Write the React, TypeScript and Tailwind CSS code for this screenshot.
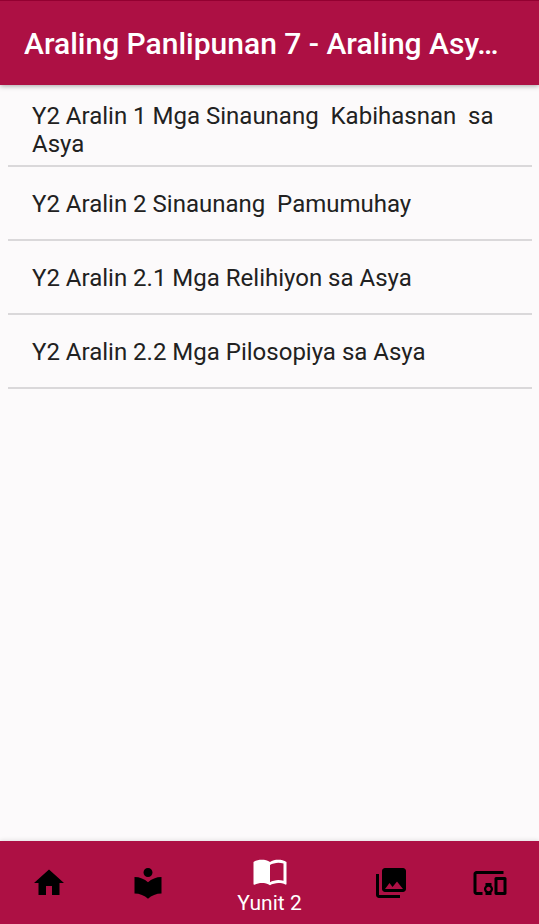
import { MdHome, MdLocalLibrary, MdImportContacts, MdCollections, MdDevicesOther } from 'react-icons/md';

const lessons = [
  'Y2 Aralin 1 Mga Sinaunang  Kabihasnan  sa Asya',
  'Y2 Aralin 2 Sinaunang  Pamumuhay',
  'Y2 Aralin 2.1 Mga Relihiyon sa Asya',
  'Y2 Aralin 2.2 Mga Pilosopiya sa Asya',
];

const tabs = [
  { name: 'Home', icon: MdHome },
  { name: 'Yunit 1', icon: MdLocalLibrary },
  { name: 'Yunit 2', icon: MdImportContacts, active: true },
  { name: 'Yunit 3', icon: MdCollections },
  { name: 'Yunit 4', icon: MdDevicesOther },
];

export default function App() {
  return (
    <div className="flex min-h-screen flex-col bg-[#fcfafb] font-[Roboto,sans-serif] text-[#212121]">
      {/* App bar */}
      <header className="relative border-t border-[#930031] bg-[#ad1044] px-6 pt-[25px] pb-[23px] shadow-[0_1px_5px_rgba(0,0,0,0.35)]">
        <h1 className="truncate text-[30px] leading-9 font-medium text-white">
          Araling Panlipunan 7 - Araling Asy…
        </h1>
      </header>

      {/* Lessons */}
      <main className="flex-1 py-2 pr-[7px] pl-2">
        <ul>
          {lessons.map((lesson) => (
            <li key={lesson} className="border-b-2 border-[#dad8da]">
              <a href="#" className="flex min-h-18 items-center px-6 pt-[9px] pb-[7px] text-2xl leading-7 whitespace-pre-wrap">
                {lesson}
              </a>
            </li>
          ))}
        </ul>
      </main>

      {/* Bottom navigation */}
      <nav className="flex h-[83px] bg-[#ad1044] shadow-[0_-1px_4px_rgba(0,0,0,0.1)]">
        {tabs.map(({ name, icon: Icon, active }) =>
          active ? (
            <button key={name} className="flex w-36 flex-col items-center justify-center pt-1 text-white">
              <Icon className="size-9" />
              <span className="text-[21px] leading-7">{name}</span>
            </button>
          ) : (
            <button key={name} aria-label={name} className="flex flex-1 items-center justify-center text-black">
              <Icon className="size-9" />
            </button>
          ),
        )}
      </nav>
    </div>
  );
}
